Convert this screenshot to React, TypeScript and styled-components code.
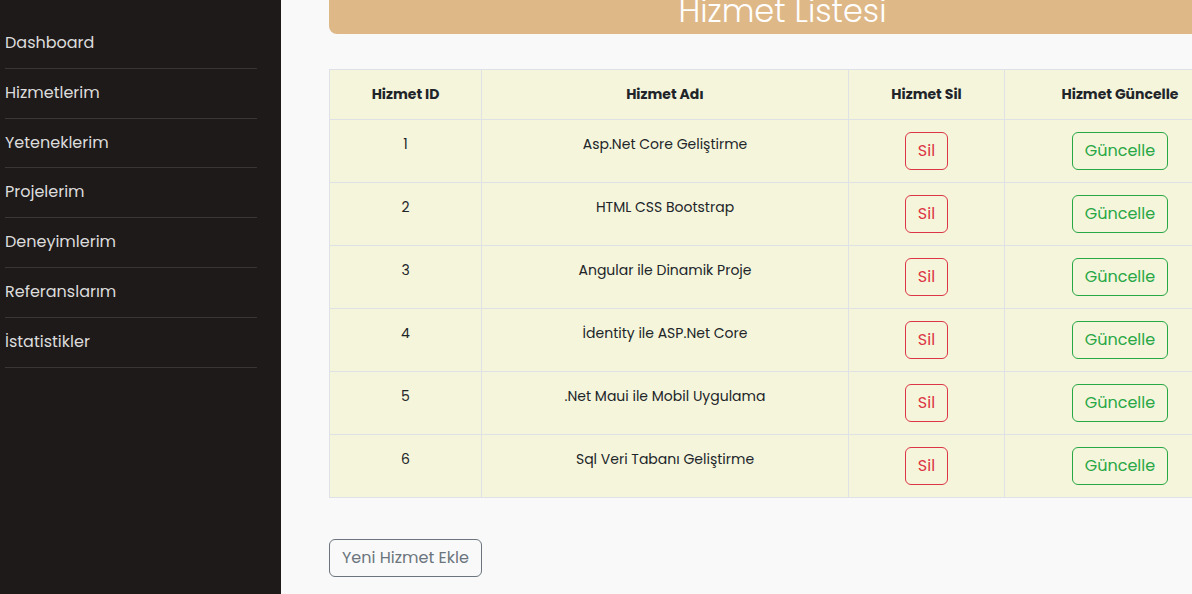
import React from 'react';
import styled, { createGlobalStyle } from 'styled-components';

const GlobalStyle = createGlobalStyle`
  html, body {
    margin: 0;
    padding: 0;
    overflow: hidden;
    background: #f9f9f9;
    font-family: 'Poppins', 'Open Sans', 'Noto Sans', sans-serif;
    color: #212529;
  }
`;

const Layout = styled.div`
  display: flex;
  width: 1240px;
  height: 594px;
`;

const Sidebar = styled.nav`
  width: 281px;
  flex-shrink: 0;
  background: #1e1a19;
  padding-top: 19px;
  box-sizing: border-box;
`;

const NavList = styled.ul`
  list-style: none;
  margin: 0;
  padding: 0 0 0 5px;
  width: 257px;
  box-sizing: border-box;
`;

const NavItem = styled.li`
  padding: 12px 0 12.8px;
  line-height: 24px;
  font-size: 16px;
  color: #dcdcdc;
  border-bottom: 1px solid #3a3634;
`;

const Main = styled.main`
  flex: 1;
  padding: 0 0 0 48px;
  display: flex;
  flex-direction: column;
`;

const Banner = styled.div`
  width: 907px;
  height: 34px;
  background: #deb887;
  border-radius: 0 0 8px 8px;
  display: flex;
  justify-content: center;
  align-items: flex-end;
  overflow: hidden;
`;

const Title = styled.h1`
  margin: 0 0 3px;
  font-size: 32px;
  font-weight: 300;
  line-height: 40px;
  color: #ffffff;
`;

const Table = styled.table`
  margin-top: 35px;
  width: 907px;
  border-collapse: collapse;
  background: #f5f5dc;
  font-size: 14px;
  table-layout: fixed;
`;

const Th = styled.th<{ $w?: number }>`
  ${p => (p.$w ? `width: ${p.$w}px;` : '')}
  padding: 12px 12px 13px;
  line-height: 24px;
  font-weight: 700;
  text-align: center;
  border: 1px solid #dee2e6;
`;

const Td = styled.td`
  padding: 12px;
  line-height: 24px;
  text-align: center;
  vertical-align: top;
  border: 1px solid #dee2e6;
`;

const OutlineButton = styled.button<{ $color: string }>`
  font-family: inherit;
  font-size: 16px;
  line-height: 24px;
  padding: 6px 12px;
  background: transparent;
  color: ${p => p.$color};
  border: 1px solid ${p => p.$color};
  border-radius: 6px;
  cursor: pointer;
`;

const Footer = styled.div`
  margin-top: 41px;
`;

const services = [
  'Asp.Net Core Geliştirme',
  'HTML CSS Bootstrap',
  'Angular ile Dinamik Proje',
  'İdentity ile ASP.Net Core',
  '.Net Maui ile Mobil Uygulama',
  'Sql Veri Tabanı Geliştirme',
];

const menu = ['Dashboard', 'Hizmetlerim', 'Yeteneklerim', 'Projelerim', 'Deneyimlerim', 'Referanslarım', 'İstatistikler'];

export default function App() {
  return (
    <>
      <GlobalStyle />
      <Layout>
        <Sidebar>
          <NavList>
            {menu.map(m => (
              <NavItem key={m}>{m}</NavItem>
            ))}
          </NavList>
        </Sidebar>
        <Main>
          <Banner>
            <Title>Hizmet Listesi</Title>
          </Banner>
          <Table>
            <thead>
              <tr>
                <Th $w={127}>Hizmet ID</Th>
                <Th $w={342}>Hizmet Adı</Th>
                <Th $w={131}>Hizmet Sil</Th>
                <Th>Hizmet Güncelle</Th>
              </tr>
            </thead>
            <tbody>
              {services.map((s, i) => (
                <tr key={s}>
                  <Td>{i + 1}</Td>
                  <Td>{s}</Td>
                  <Td><OutlineButton $color="#dc3545">Sil</OutlineButton></Td>
                  <Td><OutlineButton $color="#28a745">Güncelle</OutlineButton></Td>
                </tr>
              ))}
            </tbody>
          </Table>
          <Footer>
            <OutlineButton $color="#6c757d">Yeni Hizmet Ekle</OutlineButton>
          </Footer>
        </Main>
      </Layout>
    </>
  );
}
